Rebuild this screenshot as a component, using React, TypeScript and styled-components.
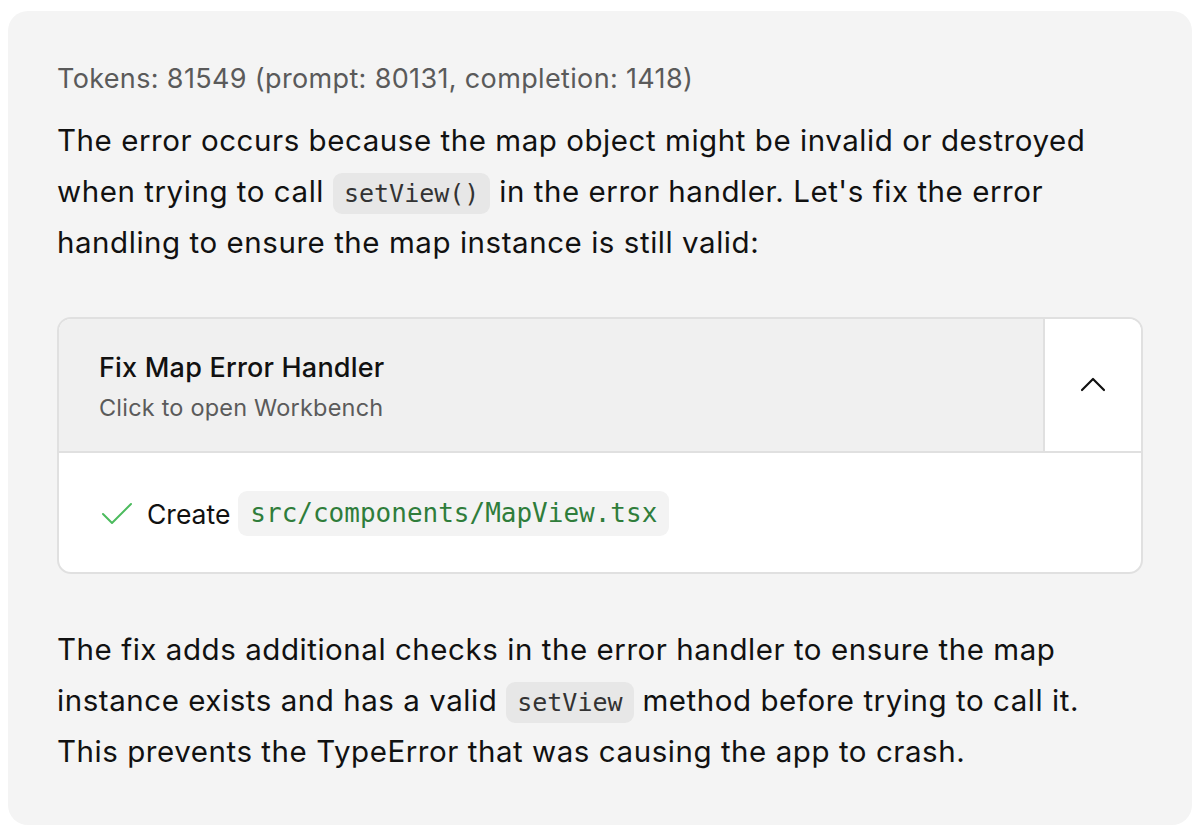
import styled, { createGlobalStyle } from 'styled-components';

const GlobalStyle = createGlobalStyle`
  html, body {
    margin: 0;
    padding: 0;
    background: #ffffff;
  }
  body {
    font-family: Inter, "Noto Sans", sans-serif;
    -webkit-font-smoothing: antialiased;
  }
`;

const Card = styled.div`
  box-sizing: border-box;
  width: 1184px;
  margin: 11px 0 10px 8px;
  padding: 50px 49px 48px;
  background: #f4f4f4;
  border-radius: 20px;
  color: #111111;
`;

const Meta = styled.div`
  font-size: 27px;
  line-height: 36px;
  letter-spacing: 0.35px;
  color: #5a5a5a;
`;

const Paragraph = styled.p`
  margin: ${({ $top }: { $top: number }) => $top}px 0 0;
  font-size: 29.5px;
  line-height: 51px;
  letter-spacing: 0.55px;
`;

const InlineCode = styled.code`
  display: inline-block;
  padding: 0 11px;
  line-height: 41px;
  font-family: "DejaVu Sans Mono", monospace;
  font-size: 25px;
  letter-spacing: 0;
  color: #333333;
  background: #e7e7e7;
  border-radius: 9px;
`;

const Artifact = styled.div`
  margin-top: 49px;
  border: 2px solid #e0e0e0;
  border-radius: 14px;
  background: #ffffff;
  overflow: hidden;
`;

const ArtifactHeader = styled.div`
  display: flex;
  border-bottom: 2px solid #e0e0e0;
`;

const HeaderInfo = styled.div`
  flex: 1;
  padding: 30px 40px 0;
  height: 132px;
  box-sizing: border-box;
  background: #f0f0f0;
  border-right: 2px solid #e0e0e0;
`;

const Title = styled.div`
  font-size: 27px;
  line-height: 38px;
  letter-spacing: 0.2px;
  font-weight: 500;
  color: #111111;
`;

const Subtitle = styled.div`
  margin-top: 4px;
  font-size: 23.5px;
  line-height: 34px;
  letter-spacing: 0.2px;
  color: #5b5b5b;
`;

const ToggleButton = styled.div`
  width: 96px;
  display: flex;
  align-items: center;
  justify-content: center;
  background: #ffffff;
`;

const ArtifactBody = styled.div`
  display: flex;
  align-items: center;
  padding: 38px 42px 36px;
`;

const ActionLabel = styled.span`
  margin: 0 8px 0 14px;
  font-size: 26.5px;
  color: #111111;
`;

const FileChip = styled.code`
  display: inline-block;
  padding: 0 12px;
  line-height: 45px;
  font-family: "DejaVu Sans Mono", monospace;
  font-size: 26px;
  color: #2f7d3b;
  background: #f3f3f3;
  border-radius: 9px;
`;

const App = () => (
  <>
    <GlobalStyle />
    <Card>
      <Meta>Tokens: 81549 (prompt: 80131, completion: 1418)</Meta>
      <Paragraph $top={18}>
        The error occurs because the map object might be invalid or destroyed
        when trying to call <InlineCode>setView()</InlineCode> in the error
        handler. Let's fix the error handling to ensure the map instance is
        still valid:
      </Paragraph>
      <Artifact>
        <ArtifactHeader>
          <HeaderInfo>
            <Title>Fix Map Error Handler</Title>
            <Subtitle>Click to open Workbench</Subtitle>
          </HeaderInfo>
          <ToggleButton>
            <svg width="26" height="16" viewBox="0 0 26 16" fill="none">
              <path
                d="M2 13 L13 2 L24 13"
                stroke="#111"
                strokeWidth="2.2"
                strokeLinecap="round"
                strokeLinejoin="round"
              />
            </svg>
          </ToggleButton>
        </ArtifactHeader>
        <ArtifactBody>
          <svg width="32" height="24" viewBox="0 0 32 24" fill="none">
            <path
              d="M2 12 L11 21 L30 2"
              stroke="#4cbb5e"
              strokeWidth="2"
              strokeLinecap="round"
              strokeLinejoin="round"
            />
          </svg>
          <ActionLabel>Create</ActionLabel>
          <FileChip>src/components/MapView.tsx</FileChip>
        </ArtifactBody>
      </Artifact>
      <Paragraph $top={50}>
        The fix adds additional checks in the error handler to ensure the map
        instance exists and has a valid <InlineCode>setView</InlineCode> method
        before trying to call it. This prevents the TypeError that was causing
        the app to crash.
      </Paragraph>
    </Card>
  </>
);

export default App;
